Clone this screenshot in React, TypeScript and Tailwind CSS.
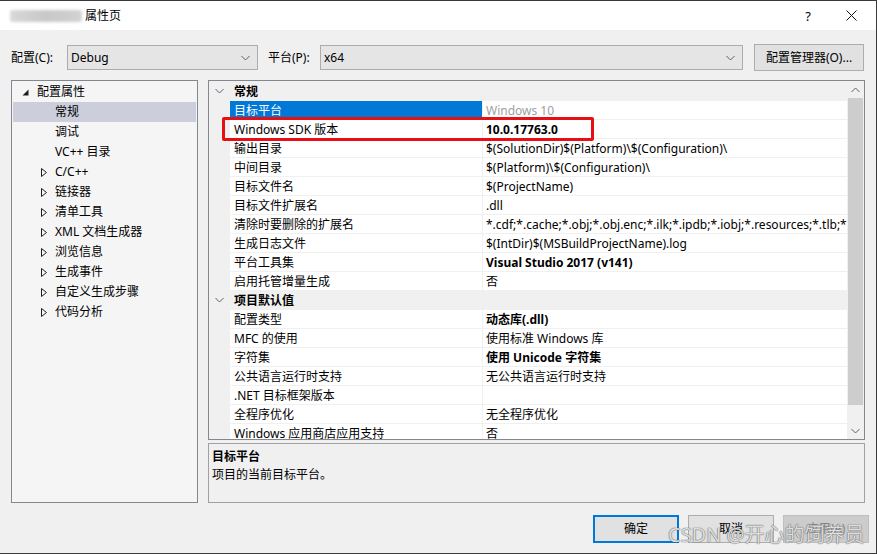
import * as React from "react";

type Prop = { name: string; value: string; bold?: boolean; selected?: boolean; muted?: boolean };

const general: Prop[] = [
  { name: "目标平台", value: "Windows 10", selected: true, muted: true },
  { name: "Windows SDK 版本", value: "10.0.17763.0", bold: true },
  { name: "输出目录", value: "$(SolutionDir)$(Platform)\\$(Configuration)\\" },
  { name: "中间目录", value: "$(Platform)\\$(Configuration)\\" },
  { name: "目标文件名", value: "$(ProjectName)" },
  { name: "目标文件扩展名", value: ".dll" },
  {
    name: "清除时要删除的扩展名",
    value:
      "*.cdf;*.cache;*.obj;*.obj.enc;*.ilk;*.ipdb;*.iobj;*.resources;*.tlb;*.tli;*.tlh;*.tmp;*.rsp;*.pgc;*.pgd;*.meta;*.tlog",
  },
  { name: "生成日志文件", value: "$(IntDir)$(MSBuildProjectName).log" },
  { name: "平台工具集", value: "Visual Studio 2017 (v141)", bold: true },
  { name: "启用托管增量生成", value: "否" },
];

const defaults: Prop[] = [
  { name: "配置类型", value: "动态库(.dll)", bold: true },
  { name: "MFC 的使用", value: "使用标准 Windows 库" },
  { name: "字符集", value: "使用 Unicode 字符集", bold: true },
  { name: "公共语言运行时支持", value: "无公共语言运行时支持" },
  { name: ".NET 目标框架版本", value: "" },
  { name: "全程序优化", value: "无全程序优化" },
  { name: "Windows 应用商店应用支持", value: "否" },
];

const tree = ["常规", "调试", "VC++ 目录", "C/C++", "链接器", "清单工具", "XML 文档生成器", "浏览信息", "生成事件", "自定义生成步骤", "代码分析"];
const collapsible = new Set(["C/C++", "链接器", "清单工具", "XML 文档生成器", "浏览信息", "生成事件", "自定义生成步骤", "代码分析"]);

function Chevron({ up = false }: { up?: boolean }) {
  return (
    <svg width="9" height="6" viewBox="0 0 9 6" aria-hidden="true">
      <path d={up ? "M0.5 5 L4.5 1 L8.5 5" : "M0.5 1 L4.5 5 L8.5 1"} fill="none" stroke="#606060" strokeWidth="1" />
    </svg>
  );
}

function Select({ value, width }: { value: string; width: string }) {
  return (
    <div className={`${width} flex h-[25px] items-center justify-between border border-[#acacac] bg-[#e5e5e5] pr-[7px] pl-[3px]`}>
      <span>{value}</span>
      <Chevron />
    </div>
  );
}

function CategoryRow({ label }: { label: string }) {
  return (
    <div className="flex h-[19px] shrink-0 overflow-hidden border-t border-[#f0f0f0] bg-[#f0f0f0] leading-[20px]">
      <div className="flex w-[21px] items-center justify-center">
        <Chevron />
      </div>
      <div className="pl-[4px] font-bold">{label}</div>
    </div>
  );
}

function PropRow({ p }: { p: Prop }) {
  return (
    <div className="flex h-[19px] shrink-0 overflow-hidden border-t border-[#f0f0f0] bg-white leading-[20px]">
      <div className="w-[21px] shrink-0 bg-[#f0f0f0]" />
      <div
        className={`w-[253px] shrink-0 overflow-hidden border-r border-[#f0f0f0] pl-[4px] whitespace-nowrap ${
          p.selected ? "bg-[#0078d7] text-white" : ""
        }`}
      >
        {p.name}
      </div>
      <div
        className={`min-w-0 flex-1 overflow-hidden pl-[3px] whitespace-nowrap ${p.bold ? "font-bold" : ""} ${
          p.muted ? "text-[#a0a0a0]" : ""
        }`}
      >
        {p.value}
      </div>
    </div>
  );
}

export default function App() {
  return (
    <div className="relative flex h-[554px] w-[877px] flex-col overflow-hidden border-t border-r border-b border-[#3a3a3a] bg-[#f0f0f0] font-['Segoe_UI','Noto_Sans','Noto_Sans_CJK_SC',sans-serif] text-[12px] leading-[18px] text-black">
      {/* title bar */}
      <div className="flex h-[29px] shrink-0 items-center bg-white pl-[10px]">
        <div className="h-[12px] w-[72px] rounded-[3px] bg-gradient-to-r from-[#d8d8d8] via-[#c8c8c8] to-[#d2d2d2] blur-[1.5px]" />
        <span className="ml-[3px]">属性页</span>
        <div className="flex-1" />
        <span className="mr-[35px] text-[13px]">?</span>
        <svg width="11" height="11" viewBox="0 0 11 11" className="mr-[19px]" aria-hidden="true">
          <path d="M0.5 0.5 L10.5 10.5 M10.5 0.5 L0.5 10.5" stroke="#111" strokeWidth="1" />
        </svg>
      </div>

      {/* configuration row */}
      <div className="mt-[14px] flex h-[27px] shrink-0 items-center pl-[11px]">
        <span className="w-[56px]">配置(C):</span>
        <Select value="Debug" width="w-[191px]" />
        <span className="ml-[10px] w-[52px]">平台(P):</span>
        <Select value="x64" width="w-[423px]" />
        <button
          type="button"
          className="ml-[11px] h-[27px] w-[110px] border border-[#adadad] bg-[#e1e1e1] text-center"
        >
          配置管理器(O)...
        </button>
      </div>

      {/* main area */}
      <div className="mt-[9px] flex h-[423px] shrink-0 pl-[11px]">
        {/* tree */}
        <div className="h-[423px] w-[187px] border border-[#828790] bg-[#f5f5f5] p-[1px]">
          <div className="flex h-[20px] items-center">
            <svg width="7" height="7" viewBox="0 0 7 7" className="ml-[9px]" aria-hidden="true">
              <path d="M6.5 0.5 L6.5 6.5 L0.5 6.5 Z" fill="#1e1e1e" />
            </svg>
            <span className="ml-[8px]">配置属性</span>
          </div>
          {tree.map((t, i) => (
            <div key={t} className={`flex h-[20px] items-center ${i === 0 ? "bg-[#cccedb]" : ""}`}>
              <div className="flex w-[42px] justify-end pr-[8px]">
                {collapsible.has(t) && (
                  <svg width="6" height="9" viewBox="0 0 6 9" aria-hidden="true">
                    <path d="M0.5 0.5 L5.5 4.5 L0.5 8.5 Z" fill="none" stroke="#1e1e1e" strokeWidth="1" />
                  </svg>
                )}
              </div>
              <span>{t}</span>
            </div>
          ))}
        </div>

        {/* right column */}
        <div className="ml-[10px] flex w-[657px] flex-col">
          <div className="flex h-[360px] border border-[#828790] bg-white">
            <div className="flex min-w-0 flex-1 flex-col overflow-hidden">
              <CategoryRow label="常规" />
              {general.map((p) => (
                <PropRow key={p.name} p={p} />
              ))}
              <CategoryRow label="项目默认值" />
              {defaults.map((p) => (
                <PropRow key={p.name} p={p} />
              ))}
            </div>
            {/* scrollbar */}
            <div className="flex w-[17px] shrink-0 flex-col bg-[#f0f0f0]">
              <div className="flex h-[17px] items-center justify-center">
                <Chevron up />
              </div>
              <div className="flex-1 px-[1px]">
                <div className="h-[307px] bg-[#cdcdcd]" />
              </div>
              <div className="flex h-[17px] items-center justify-center">
                <Chevron />
              </div>
            </div>
          </div>

          <div className="mt-[3px] h-[60px] border border-[#a0a0a0] bg-[#f0f0f0] px-[3px] pt-[4px]">
            <div className="font-bold">目标平台</div>
            <div>项目的当前目标平台。</div>
          </div>
        </div>
      </div>

      {/* buttons */}
      <div className="mt-[12px] flex h-[28px] shrink-0 justify-end gap-[9px] pr-[7px]">
        <button type="button" className="w-[86px] border-2 border-[#0078d7] bg-[#e1e1e1]">
          确定
        </button>
        <button type="button" className="w-[86px] border border-[#adadad] bg-[#e1e1e1]">
          取消
        </button>
        <button type="button" className="w-[86px] border border-[#bfbfbf] bg-[#cccccc] text-[#838383]">
          应用(A)
        </button>
      </div>

      {/* highlight box */}
      <div className="absolute top-[116px] left-[222px] h-[24px] w-[372px] rounded-[2px] border-[3px] border-[#e50f14]" />

      {/* watermark */}
      <span className="absolute top-[520px] left-[668px] text-[20px] leading-[28px] whitespace-nowrap text-white/80 [text-shadow:0_0_1px_#555,0_0_1px_#555]">
        CSDN @开心的饲养员
      </span>
    </div>
  );
}
